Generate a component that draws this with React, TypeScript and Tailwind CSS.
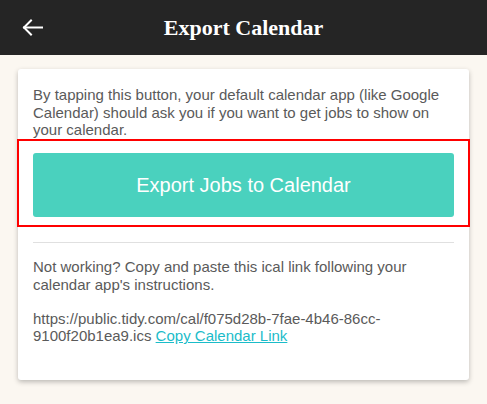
import React from "react";

export default function App() {
  return (
    <div className="w-[487px] h-[404px] bg-[#fbf7f1] overflow-hidden" style={{ fontFamily: '"Liberation Sans", Arial, sans-serif' }}>
      <div className="h-[55px] bg-[#252525] flex items-center relative">
        <div className="absolute left-[22px] top-[19px]">
          <svg width="22" height="17" viewBox="0 0 22 17" fill="none" stroke="white" strokeWidth="2" strokeLinecap="square">
            <path d="M2 8.5 H20" />
            <path d="M9 1.5 L2 8.5 L9 15.5" />
          </svg>
        </div>
        <div className="flex-1 text-center text-white font-bold text-[22px]" style={{ fontFamily: '"Liberation Serif", "Times New Roman", serif' }}>
          Export Calendar
        </div>
      </div>
      <div className="px-[18px] pt-[14px]">
        <div className="bg-white rounded-[3px] shadow-[0_2px_5px_rgba(0,0,0,0.25)] pb-[35px]">
          <p className="px-[15px] pt-[17px] text-[15px] leading-[17.5px] text-[#5a5a5a]">
            By tapping this button, your default calendar app (like Google Calendar) should ask you if you want to get jobs to show on your calendar.
          </p>
          <div className="mx-[-1px] border-2 border-[#ff0000] pt-[12px] pb-[8px] px-[14px]">
            <button className="w-full h-[64px] rounded-[3px] bg-[#4ad1be] text-white text-[20px]">
              Export Jobs to Calendar
            </button>
          </div>
          <div className="mx-[15px] mt-[15px] h-px bg-[#e0e0e0]" />
          <p className="px-[15px] mt-[15px] text-[15px] leading-[18px] text-[#5a5a5a]">
            Not working? Copy and paste this ical link following your calendar app's instructions.
          </p>
          <p className="px-[15px] mt-[16px] text-[15px] leading-[17.5px] text-[#5a5a5a]">
            https://public.tidy.com/cal/f075d28b-7fae-4b46-86cc-9100f20b1ea9.ics{" "}
            <a className="text-[#1bbcc9] underline">Copy Calendar Link</a>
          </p>
        </div>
      </div>
    </div>
  );
}
